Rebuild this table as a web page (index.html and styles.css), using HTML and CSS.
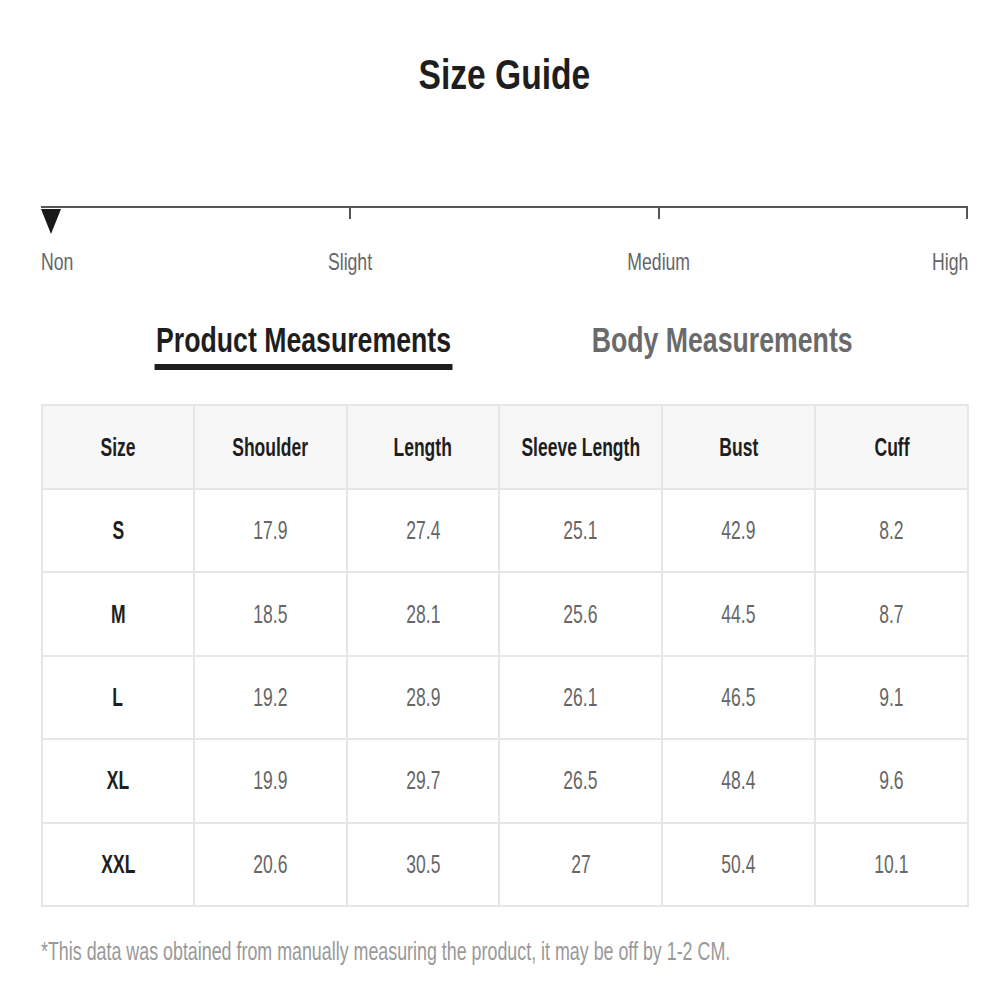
FILE: index.html
```html
<!DOCTYPE html>
<html>
<head>
<meta charset="utf-8">
<link rel="stylesheet" href="styles.css">
</head>
<body>
<div class="page">
  <h1 class="title"><span class="nx">Size Guide</span></h1>

  <div class="scale">
    <div class="scale-marks">
      <div class="mark mark-first"><span class="pointer"></span></div>
      <div class="mark"><span class="tick"></span></div>
      <div class="mark"><span class="tick"></span></div>
      <div class="mark mark-last"><span class="tick"></span></div>
    </div>
    <div class="scale-labels">
      <div class="lbl lbl-first"><span class="nx">Non</span></div>
      <div class="lbl"><span class="nx">Slight</span></div>
      <div class="lbl"><span class="nx">Medium</span></div>
      <div class="lbl lbl-last"><span class="nx">High</span></div>
    </div>
  </div>

  <div class="tabs">
    <div class="tab tab-active">Product Measurements</div>
    <div class="tab">Body Measurements</div>
  </div>

  <table class="sizes">
    <colgroup>
      <col class="c1"><col class="c2"><col class="c3"><col class="c4"><col class="c5"><col class="c6">
    </colgroup>
    <thead>
      <tr><th><span class="nx">Size</span></th><th><span class="nx">Shoulder</span></th><th><span class="nx">Length</span></th><th><span class="nx">Sleeve Length</span></th><th><span class="nx">Bust</span></th><th><span class="nx">Cuff</span></th></tr>
    </thead>
    <tbody>
      <tr><td class="sz"><span class="nx">S</span></td><td><span class="nx">17.9</span></td><td><span class="nx">27.4</span></td><td><span class="nx">25.1</span></td><td><span class="nx">42.9</span></td><td><span class="nx">8.2</span></td></tr>
      <tr><td class="sz"><span class="nx">M</span></td><td><span class="nx">18.5</span></td><td><span class="nx">28.1</span></td><td><span class="nx">25.6</span></td><td><span class="nx">44.5</span></td><td><span class="nx">8.7</span></td></tr>
      <tr><td class="sz"><span class="nx">L</span></td><td><span class="nx">19.2</span></td><td><span class="nx">28.9</span></td><td><span class="nx">26.1</span></td><td><span class="nx">46.5</span></td><td><span class="nx">9.1</span></td></tr>
      <tr><td class="sz"><span class="nx">XL</span></td><td><span class="nx">19.9</span></td><td><span class="nx">29.7</span></td><td><span class="nx">26.5</span></td><td><span class="nx">48.4</span></td><td><span class="nx">9.6</span></td></tr>
      <tr><td class="sz"><span class="nx">XXL</span></td><td><span class="nx">20.6</span></td><td><span class="nx">30.5</span></td><td><span class="nx">27</span></td><td><span class="nx">50.4</span></td><td><span class="nx">10.1</span></td></tr>
    </tbody>
  </table>

  <p class="note"><span class="nx nx-left">*This data was obtained from manually measuring the product, it may be off by 1-2 CM.</span></p>
</div>
</body>
</html>
```

FILE: styles.css
```css
* { box-sizing: border-box; }
html, body { margin: 0; padding: 0; background: #fff; }
body {
  font-family: "Liberation Sans", Arial, sans-serif;
  color: #222;
}
/* narrow (condensed) rendering of Arial-like text */
.nx {
  display: inline-block;
  white-space: nowrap;
  transform: scaleX(0.7);
  transform-origin: center;
}
.nx-left { transform-origin: left center; }

.page {
  width: 927px;
  margin-left: 41px;
  padding-top: 52px;
}
.title {
  margin: 0;
  text-align: center;
  font-size: 42px;
  font-weight: 700;
  line-height: 46px;
  color: #1e1e1e;
}
.title .nx { transform: scaleX(0.8); }

.scale {
  margin-top: 108px;
}
.scale-marks {
  display: flex;
  justify-content: space-between;
  border-top: 2px solid #555;
  height: 30px;
}
.mark {
  width: 0;
  display: flex;
  justify-content: center;
}
.mark-first { justify-content: flex-start; }
.mark-last { justify-content: flex-end; }
.tick {
  display: block;
  width: 2px;
  height: 11px;
  background: #555;
  flex: none;
}
.pointer {
  display: block;
  flex: none;
  width: 0;
  height: 0;
  margin-top: 1px;
  border-left: 10px solid transparent;
  border-right: 10px solid transparent;
  border-top: 25px solid #1a1a1a;
}
.scale-labels {
  display: flex;
  justify-content: space-between;
  margin-top: 13px;
  font-size: 24px;
  line-height: 26px;
  color: #666;
}
.lbl {
  width: 0;
  display: flex;
  justify-content: center;
}
.lbl .nx { flex: none; transform: scaleX(0.735); }
.lbl-first { justify-content: flex-start; }
.lbl-first .nx { transform-origin: left center; }
.lbl-last { justify-content: flex-end; }
.lbl-last .nx { transform-origin: right center; }

.tabs {
  display: flex;
  justify-content: center;
  gap: 50px;
  margin-top: 45px;
  padding-right: 6px;
}
.tab {
  font-size: 35px;
  font-weight: 700;
  line-height: 40px;
  color: #6a6a6a;
  padding: 0 2px 4px;
  border-bottom: 6px solid transparent;
  white-space: nowrap;
  transform: scaleX(0.762);
  transform-origin: center;
}
.tab-active {
  color: #1e1e1e;
  border-bottom-color: #1e1e1e;
}

.sizes {
  margin-top: 34px;
  width: 927px;
  border-collapse: collapse;
  table-layout: fixed;
  border: 2px solid #e6e6e6;
}
.c1, .c3 { width: 152px; }
.c2, .c5, .c6 { width: 153px; }
.c4 { width: 163px; }
.sizes th, .sizes td {
  border: 2px solid #e6e6e6;
  text-align: center;
  font-size: 25px;
  padding: 0;
}
.sizes .nx { margin: 0 -40px; }
.sizes th {
  height: 84px;
  background: #f7f7f7;
  color: #1e1e1e;
  font-weight: 700;
}
.sizes td {
  height: 83.4px;
  color: #666;
  font-weight: 400;
}
.sizes td.sz {
  color: #1e1e1e;
  font-weight: 700;
}
.note {
  margin: 30px 0 0;
  font-size: 25px;
  line-height: 28px;
  color: #999;
}
.note .nx { transform: scaleX(0.714); }
```
